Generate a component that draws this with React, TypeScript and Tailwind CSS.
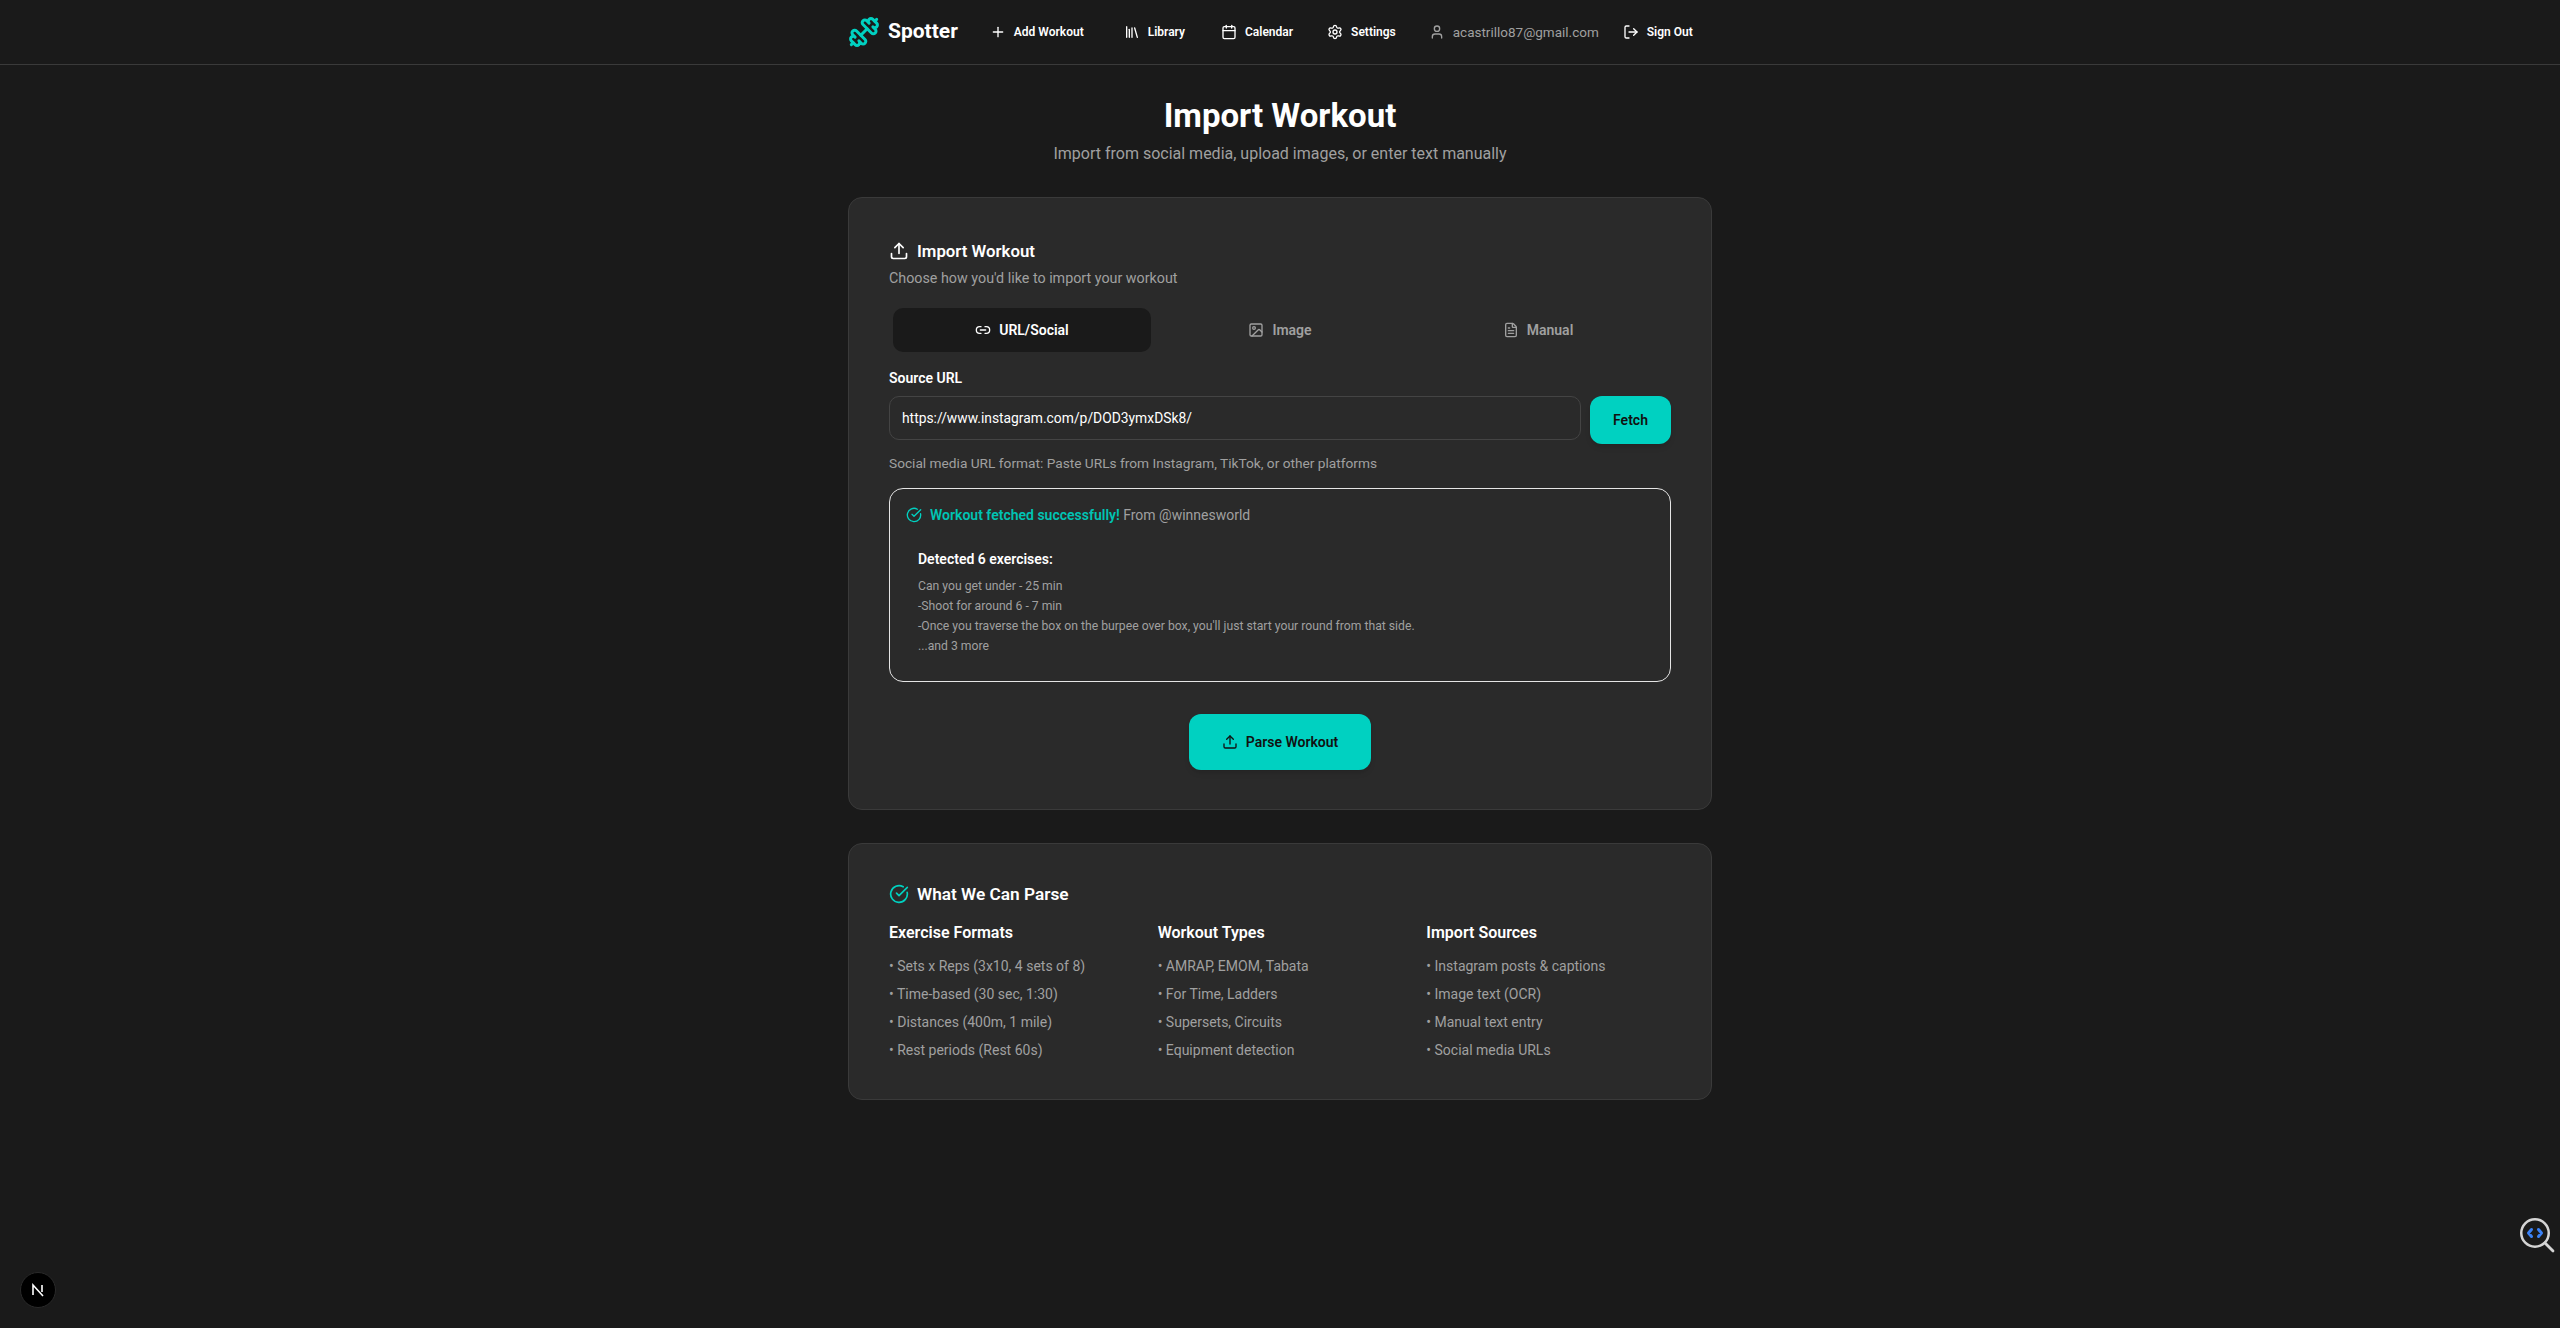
import { Calendar, CircleCheckBig, Dumbbell, FileText, Image, Library, Link2, LogOut, Plus, Settings, Upload, User } from 'lucide-react';
import type { ComponentType, ReactNode } from 'react';

type IconType = ComponentType<{ size?: number; className?: string; strokeWidth?: number }>;

const navItems: { label: string; icon: IconType; gap: string }[] = [
  { label: 'Add Workout', icon: Plus, gap: 'ml-[32px]' },
  { label: 'Library', icon: Library, gap: 'ml-[40px]' },
  { label: 'Calendar', icon: Calendar, gap: 'ml-[36px]' },
  { label: 'Settings', icon: Settings, gap: 'ml-[34px]' },
];

const columns = [
  {
    title: 'Exercise Formats',
    items: ['Sets x Reps (3x10, 4 sets of 8)', 'Time-based (30 sec, 1:30)', 'Distances (400m, 1 mile)', 'Rest periods (Rest 60s)'],
  },
  {
    title: 'Workout Types',
    items: ['AMRAP, EMOM, Tabata', 'For Time, Ladders', 'Supersets, Circuits', 'Equipment detection'],
  },
  {
    title: 'Import Sources',
    items: ['Instagram posts & captions', 'Image text (OCR)', 'Manual text entry', 'Social media URLs'],
  },
];

const tabs: { label: string; icon: IconType; active?: boolean }[] = [
  { label: 'URL/Social', icon: Link2, active: true },
  { label: 'Image', icon: Image },
  { label: 'Manual', icon: FileText },
];

function Card({ className, children }: { className: string; children: ReactNode }) {
  return <div className={`rounded-[14px] border border-[#3a3a3a] bg-[#2a2a2a] px-10 ${className}`}>{children}</div>;
}

export default function App() {
  return (
    <div className="min-h-screen bg-[#1a1a1a] font-['Roboto',sans-serif] text-white">
      <header className="h-[65px] border-b border-[#3a3a3a]">
        <nav className="mx-auto flex h-16 w-[864px] items-center whitespace-nowrap">
          <Dumbbell size={32} className="text-[#00d1c1]" strokeWidth={2.25} />
          <span className="ml-2 text-[21px] font-bold">Spotter</span>
          {navItems.map(({ label, icon: Icon, gap }) => (
            <a key={label} className={`${gap} flex items-center gap-2 text-xs font-semibold`}>
              <Icon size={16} />
              {label}
            </a>
          ))}
          <span className="ml-[33px] flex items-center gap-2 text-[13.5px] text-[#a0a0a0]">
            <User size={16} />
            acastrillo87@gmail.com
          </span>
          <a className="ml-[24px] flex items-center gap-2 text-xs font-semibold">
            <LogOut size={16} />
            Sign Out
          </a>
        </nav>
      </header>

      <main className="mx-auto w-[864px]">
        <div className="pt-[32px] text-center">
          <h1 className="text-[33px] leading-[38px] font-bold">Import Workout</h1>
          <p className="mt-[7px] text-base leading-6 text-[#a0a0a0]">Import from social media, upload images, or enter text manually</p>
        </div>

        <Card className="mt-[31px] h-[613px] pt-[41px]">
          <div className="flex items-center gap-2 text-[16.8px] leading-6 font-semibold">
            <Upload size={20} />
            Import Workout
          </div>
          <p className="mt-[5px] text-[14.3px] leading-5 text-[#a0a0a0]">Choose how you'd like to import your workout</p>

          <div className="mt-5 grid grid-cols-3 px-1">
            {tabs.map(({ label, icon: Icon, active }) => (
              <button
                key={label}
                className={`flex h-11 items-center justify-center gap-2 rounded-[10px] text-sm font-semibold ${active ? 'bg-[#1a1a1a] text-white' : 'text-[#a0a0a0]'}`}
              >
                <Icon size={16} />
                {label}
              </button>
            ))}
          </div>

          <label className="mt-4 block text-sm leading-5 font-semibold">Source URL</label>
          <div className="mt-2 flex items-start gap-[9px]">
            <div className="flex h-11 flex-1 items-center rounded-[10px] border border-[#444444] px-3 pt-[1px] text-[13.85px]">https://www.instagram.com/p/DOD3ymxDSk8/</div>
            <button className="h-12 w-[81px] rounded-[12px] bg-[#00d1c1] text-sm font-semibold text-[#111] shadow-md">Fetch</button>
          </div>
          <p className="mt-[9px] text-[13.7px] leading-5 text-[#a0a0a0]">Social media URL format: Paste URLs from Instagram, TikTok, or other platforms</p>

          <div className="mt-[15px] h-[194px] rounded-[14px] border border-[#e5e5e5] px-4 pt-4">
            <div className="flex items-center gap-2 text-sm leading-5">
              <CircleCheckBig size={16} className="text-[#00d1c1]" />
              <p className="text-[#a0a0a0]">
                <span className="font-semibold text-[#00c4b4]">Workout fetched successfully!</span> From @winnesworld
              </p>
            </div>
            <div className="mt-[24px] pl-[12px]">
              <p className="text-sm leading-5 font-semibold">Detected 6 exercises:</p>
              <ul className="mt-[7px] text-[12.2px] leading-5 text-[#a0a0a0]">
                <li>Can you get under - 25 min</li>
                <li>-Shoot for around 6 - 7 min</li>
                <li>-Once you traverse the box on the burpee over box, you'll just start your round from that side.</li>
                <li>...and 3 more</li>
              </ul>
            </div>
          </div>

          <div className="mt-8 flex justify-center">
            <button className="flex h-14 w-[182px] items-center justify-center gap-2 rounded-[12px] bg-[#00d1c1] text-sm font-semibold text-[#111] shadow-md">
              <Upload size={16} />
              Parse Workout
            </button>
          </div>
        </Card>

        <Card className="mt-[33px] h-[257px] pt-[36px]">
          <div className="flex items-center gap-2 text-[17.25px] leading-7 font-semibold">
            <CircleCheckBig size={20} className="text-[#00d1c1]" />
            What We Can Parse
          </div>
          <div className="mt-[13px] grid grid-cols-3 gap-6">
            {columns.map((col) => (
              <div key={col.title}>
                <h3 className="text-base leading-6 font-semibold">{col.title}</h3>
                <ul className="mt-[11px] space-y-2 text-sm leading-5 text-[#a0a0a0]">
                  {col.items.map((item) => (
                    <li key={item}>• {item}</li>
                  ))}
                </ul>
              </div>
            ))}
          </div>
        </Card>
      </main>

      {/* dev tools indicator */}
      <div className="fixed bottom-[20px] left-[20px] flex h-9 w-9 items-center justify-center rounded-full border border-[#2a2a2a] bg-black">
        <svg width="16" height="16" viewBox="0 0 16 16" fill="none" stroke="white" strokeWidth="1.6">
          <path d="M3 13V3l10 11M12 3v7" />
        </svg>
      </div>

      {/* inspector button */}
      <div className="fixed right-0 bottom-[74px]">
        <svg width="40" height="40" viewBox="0 0 40 40" fill="none" strokeLinecap="round" strokeLinejoin="round">
          <circle cx="15" cy="19" r="13.75" stroke="#d4d4d4" strokeWidth="2.5" />
          <path d="M25 29l8 8" stroke="#d4d4d4" strokeWidth="2.75" />
          <path d="M11.5 15.5L8.5 19l3 3.5M18.5 15.5l3 3.5-3 3.5" stroke="#3b82f6" strokeWidth="3" />
        </svg>
      </div>
    </div>
  );
}
